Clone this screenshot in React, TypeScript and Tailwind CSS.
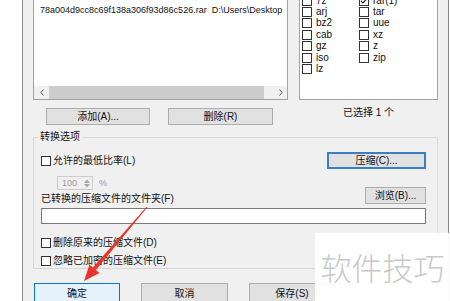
import React from "react";

function Box({ checked = false }: { checked?: boolean }) {
  return (
    <span className="inline-flex w-[10px] h-[10px] shrink-0 border border-[#333333] bg-white items-center justify-center">
      {checked && (
        <svg width="8" height="8" viewBox="0 0 8 8">
          <path d="M1 4 L3 6 L7 1.5" stroke="#222" strokeWidth="1.2" fill="none" />
        </svg>
      )}
    </span>
  );
}

function Btn({ children, className = "" }: { children: React.ReactNode; className?: string }) {
  return (
    <div
      className={
        "flex items-center justify-center shrink-0 bg-[#e1e1e1] border border-[#adadad] text-[10px] leading-[12px] text-[#111] " +
        className
      }
    >
      {children}
    </div>
  );
}

const col1 = ["7z", "arj", "bz2", "cab", "gz", "iso", "lz"];
const col2 = ["rar(1)", "tar", "uue", "xz", "z", "zip"];

export default function App() {
  return (
    <div className="relative w-[450px] h-[301px] overflow-hidden bg-white flex font-['Liberation_Sans','Noto_Sans_CJK_SC',sans-serif] text-[10px] leading-[12px] text-[#111]">
      <div className="w-[22px] shrink-0 bg-white" />
      <div className="w-[427px] shrink-0 h-full bg-[#f0f0f0] border-l border-r border-[#8c8c8c] px-[10px] flex flex-col">
        {/* lists */}
        <div className="flex h-[100px] gap-[11px] shrink-0">
          <div className="w-[255px] h-full bg-white border-x border-b border-[#a3a3a3] flex flex-col">
            <div className="flex-1 pl-[6px] pt-[4px] text-[9px] leading-[12px] whitespace-nowrap overflow-hidden">
              <span>78a004d9cc8c69f138a306f93d86c526.rar</span>
              <span className="ml-[5px]">D:\Users\Desktop</span>
            </div>
            <div className="h-[13px] flex bg-[#f0f0f0]">
              <div className="w-[15px] flex items-center justify-center">
                <svg width="4" height="7" viewBox="0 0 4 7">
                  <path d="M3.5 0.5 L0.8 3.5 L3.5 6.5" stroke="#555" strokeWidth="1" fill="none" />
                </svg>
              </div>
              <div className="w-[215px] bg-[#cdcdcd]" />
              <div className="flex-1" />
              <div className="w-[13px] flex items-center justify-center">
                <svg width="4" height="7" viewBox="0 0 4 7">
                  <path d="M0.5 0.5 L3.2 3.5 L0.5 6.5" stroke="#555" strokeWidth="1" fill="none" />
                </svg>
              </div>
            </div>
          </div>
          <div className="w-[139px] h-full bg-white border-x border-b border-[#a3a3a3] overflow-hidden">
            <div className="flex -mt-[5px] pl-[2px]">
              <div className="w-[57px] flex flex-col">
                {col1.map((t) => (
                  <div key={t} className="h-[11.4px] flex items-center gap-[4px] leading-[10px]">
                    <Box />
                    <span>{t}</span>
                  </div>
                ))}
              </div>
              <div className="flex flex-col">
                {col2.map((t, i) => (
                  <div key={t} className="h-[11.4px] flex items-center gap-[4px] leading-[10px]">
                    <Box checked={i === 0} />
                    <span>{t}</span>
                  </div>
                ))}
              </div>
            </div>
          </div>
        </div>
        {/* buttons under lists */}
        <div className="flex h-[31px] shrink-0">
          <div className="w-[255px] flex pt-[8px] pl-[13px]">
            <Btn className="w-[104px] h-[17px]">添加(A)...</Btn>
            <Btn className="w-[105px] h-[17px] ml-[18px]">删除(R)</Btn>
          </div>
          <div className="w-[139px] ml-[11px] pt-[7px] text-center">已选择 1 个</div>
        </div>
        {/* group */}
        <fieldset className="w-[405px] border border-[#d9d9d9] pl-[7px] pr-[11px] pb-[1px] shrink-0">
          <legend className="-ml-[3px] px-[2px] leading-[12px]">转换选项</legend>
          <div className="flex items-center justify-between mt-[9px]">
            <div className="flex items-center gap-[2px]">
              <Box />
              <span>允许的最低比率(L)</span>
            </div>
            <div className="w-[99px] h-[17px] flex items-center justify-center bg-[#e1e1e1] border-2 border-[#3c7fc0]">
              压缩(C)...
            </div>
          </div>
          <div className="flex items-end justify-between mt-[7px]">
            <div className="flex flex-col">
              <div className="flex items-center ml-[16px] h-[14px]">
                <div className="w-[36px] h-[14px] border border-[#cccccc] bg-[#f0f0f0] flex items-center">
                  <span className="ml-[4px] text-[9px] text-[#9a9a9a]">100</span>
                  <div className="ml-auto mr-[2px] flex flex-col items-center gap-[1px]">
                    <svg width="6" height="4" viewBox="0 0 6 4">
                      <path d="M0 4 L3 0.5 L6 4 Z" fill="#a8a8a8" />
                    </svg>
                    <svg width="6" height="4" viewBox="0 0 6 4">
                      <path d="M0 0 L3 3.5 L6 0 Z" fill="#a8a8a8" />
                    </svg>
                  </div>
                </div>
                <span className="ml-[6px] text-[9px] text-[#9a9a9a]">%</span>
              </div>
              <div className="mt-[3px]">已转换的压缩文件的文件夹(F)</div>
            </div>
            <Btn className="w-[61px] h-[17px] mb-[1px]">浏览(B)...</Btn>
          </div>
          <div className="mt-[3px] h-[16px] w-full bg-white border border-[#7a7a7a]" />
          <div className="mt-[13px] h-[12px] flex items-center gap-[2px]">
            <Box />
            <span>删除原来的压缩文件(D)</span>
          </div>
          <div className="mt-[6px] h-[12px] flex items-center gap-[2px]">
            <Box />
            <span>忽略已加密的压缩文件(E)</span>
          </div>
        </fieldset>
        {/* bottom buttons */}
        <div className="flex mt-[14px] ml-[1px] shrink-0">
          <div className="w-[86px] h-[22px] flex items-center justify-center bg-[#e5f1fb] border border-[#0078d7]">
            确定
          </div>
          <Btn className="w-[87px] h-[22px] ml-[21px]">取消</Btn>
          <Btn className="w-[86px] h-[22px] ml-[21px]">保存(S)</Btn>
        </div>
      </div>
      <div className="flex-1 bg-white" />

      {/* red arrow overlay */}
      <svg className="absolute left-0 top-0 pointer-events-none" width="450" height="301" viewBox="0 0 450 301">
        <polygon
          points="147.4,207.3 146.6,206.7 92.9,267.5 95.9,270.1"
          fill="#e8342c"
        />
        <polygon points="84,281 99.5,273 89.5,264.5" fill="#e8342c" />
      </svg>

      {/* watermark */}
      <div className="absolute left-[315px] top-[233px] w-[135px] h-[68px] bg-white/95 flex items-center justify-center">
        <span className="text-[31px] leading-[36px] text-[#c9c9c9] font-['Noto_Sans_CJK_SC',sans-serif] font-light tracking-[0px]">
          软件技巧
        </span>
      </div>
    </div>
  );
}
